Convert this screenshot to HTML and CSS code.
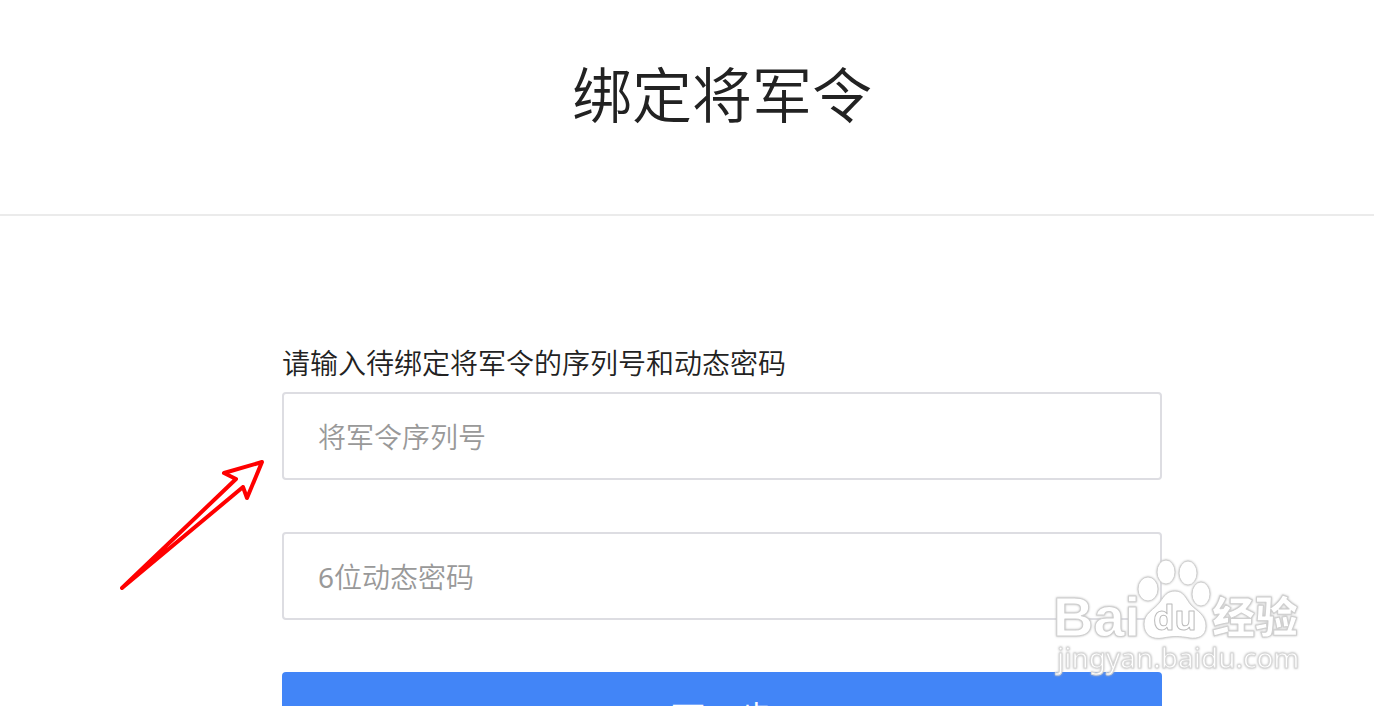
FILE: index.html
```html
<!DOCTYPE html>
<html lang="zh-CN">
<head>
<meta charset="utf-8">
<meta name="viewport" content="width=device-width, initial-scale=1">
<title>绑定将军令</title>
<link rel="stylesheet" href="styles.css">
</head>
<body>
<header class="header">
  <h1 class="title">绑定将军令</h1>
</header>
<main class="main">
  <form class="form">
    <label class="label" for="serial">请输入待绑定将军令的序列号和动态密码</label>
    <input class="field" id="serial" type="text" placeholder="将军令序列号">
    <input class="field" id="code" type="text" placeholder="6位动态密码" aria-label="6位动态密码">
    <button class="submit" type="button">下一步</button>
  </form>
</main>
<svg class="arrow" width="150" height="136" viewBox="0 0 150 136" aria-hidden="true">
  <path d="M7 133L121 24L109 18L147 7L132 43L128 32Z" fill="none"/>
</svg>
<svg class="watermark" width="260" height="126" viewBox="0 0 260 126" role="img" aria-label="Baidu 经验 jingyan.baidu.com">
  <g class="mark">
    <text class="brand" x="8" y="81">Bai</text>
    <ellipse cx="103" cy="34" rx="10" ry="12"/>
    <ellipse cx="121" cy="17" rx="9" ry="12"/>
    <ellipse cx="143" cy="18" rx="9" ry="12"/>
    <ellipse cx="156" cy="39" rx="9" ry="12"/>
    <path d="M130 36C139 36 141 44 146 50C152 56 161 60 161 71C161 82 152 84 145 83C134 81 128 81 118 83C107 85 99 80 99 69C99 58 109 55 115 47C119 41 122 36 130 36Z"/>
    <text class="du" x="108" y="75">du</text>
    <text class="exp" x="167" y="78">经验</text>
    <text class="site" x="12" y="113">jingyan.baidu.com</text>
  </g>
</svg>
</body>
</html>
```
FILE: styles.css
```css
* {
  box-sizing: border-box;
}

body {
  position: relative;
  height: 100vh;
  margin: 0;
  overflow: hidden;
  background: #fff;
  color: #222;
  font-family: "Noto Sans CJK SC DemiLight", "Noto Sans CJK SC", sans-serif;
  font-weight: 350;
}

.header {
  padding: 47px 0 77px 70px;
  border-bottom: 2px solid #ebebeb;
}

.title {
  margin: 0;
  font-size: 60px;
  font-weight: 350;
  line-height: 90px;
  text-align: center;
}

.main {
  padding: 125px 0 0 70px;
}

.form {
  display: flex;
  flex-direction: column;
  width: 100%;
  max-width: 880px;
  margin: 0 auto;
}

.label {
  margin-bottom: 9px;
  font-size: 28px;
  line-height: 42px;
}

.field {
  width: 100%;
  height: 88px;
  margin: 0 0 52px;
  padding: 2px 34px 0;
  border: 2px solid #dddde2;
  border-radius: 4px;
  background: #fff;
  color: #222;
  font-family: "Noto Sans", "Noto Sans CJK SC DemiLight", "Noto Sans CJK SC", sans-serif;
  font-size: 28px;
  font-weight: 400;
}

.field::placeholder {
  color: #999;
  opacity: 1;
}

.submit {
  height: 88px;
  padding: 0;
  border: 0;
  border-radius: 4px;
  background: #4285f7;
  color: #fff;
  font-family: "Noto Sans CJK SC DemiLight", "Noto Sans CJK SC", sans-serif;
  font-size: 34px;
  font-weight: 350;
}

.arrow {
  position: absolute;
  top: 455px;
  left: 115px;
  stroke: #f00;
  stroke-width: 4;
  stroke-linejoin: round;
  stroke-linecap: round;
}

.watermark {
  position: absolute;
  top: 555px;
  left: 1045px;
}

.mark {
  fill: #fff;
  stroke: #cfcfcf;
  stroke-width: 1;
  stroke-linejoin: round;
  filter: drop-shadow(0 0 1px #bbb);
}

.brand {
  font: 700 56px "Liberation Sans", sans-serif;
}

.du {
  font: 700 34px "Noto Sans", sans-serif;
  stroke: #bbb;
}

.exp {
  font: 900 43px "Noto Sans CJK SC", sans-serif;
}

.site {
  font: 400 28px "Noto Sans", sans-serif;
  stroke: #d8d8d8;
}
```
